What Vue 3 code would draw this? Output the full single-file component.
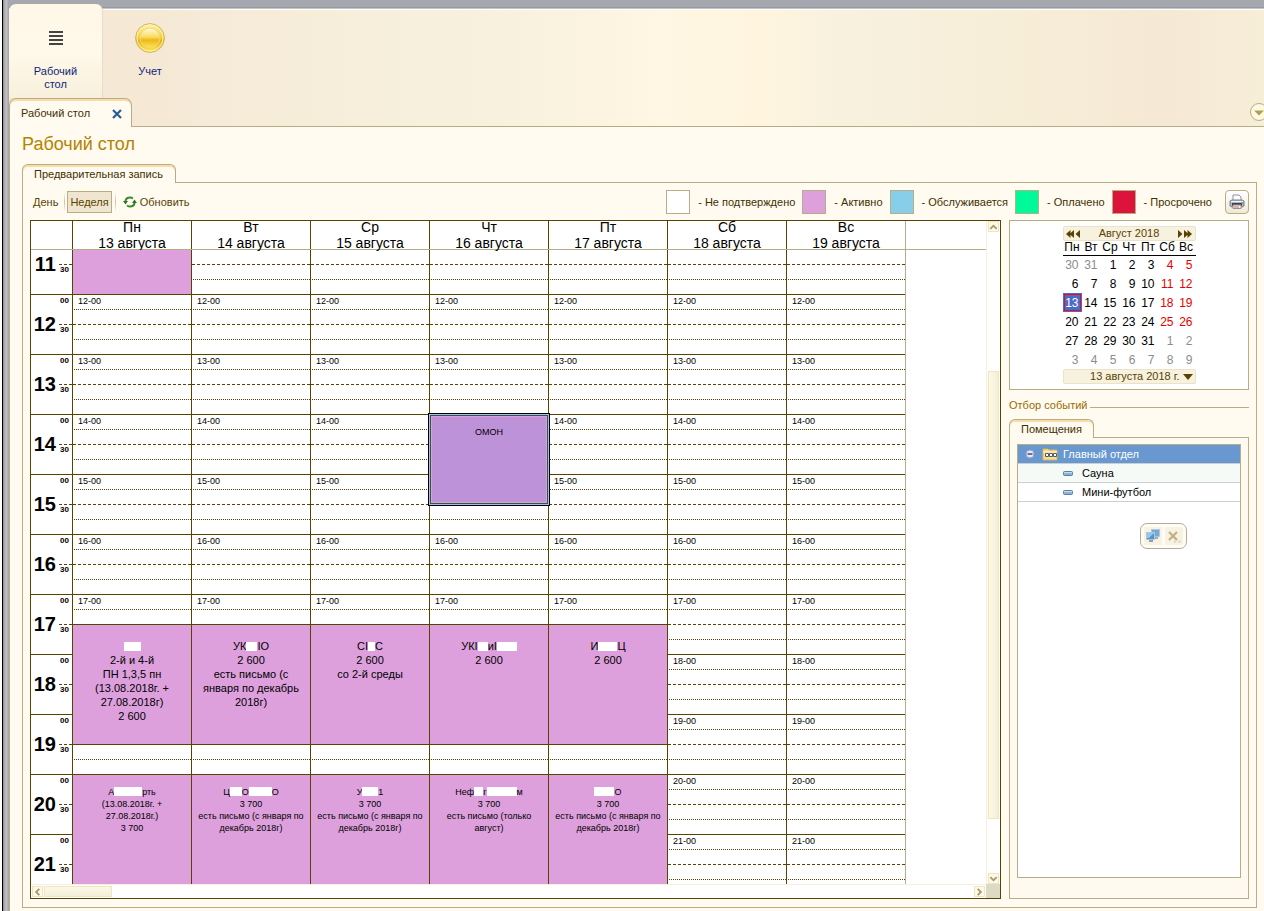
<script setup>
import { ref } from 'vue'

const FIRST_HOUR = 11
const hours = Array.from({ length: 11 }, (_, i) => FIRST_HOUR + i)
const slots = Array.from({ length: 44 }, (_, i) => i)

// In event lines a number is a blanked-out stretch of that many pixels.
const winter = ['есть письмо (с января по', 'декабрь 2018г)']
const days = [
  {
    name: 'Пн', date: '13 августа', events: [
      { from: 10, to: 12, lines: [] },
      { from: 17.5, to: 19.5, lines: [[17], '2-й и 4-й', 'ПН 1,3,5 пн', '(13.08.2018г. +', '27.08.2018г)', '2 600'] },
      { from: 20, to: 22, small: true, lines: [['А', 28, 'рть'], '(13.08.2018г. +', '27.08.2018г.)', '3 700'] }
    ]
  },
  {
    name: 'Вт', date: '14 августа', events: [
      { from: 17.5, to: 19.5, lines: [['УК', 11, 'IО'], '2 600', 'есть письмо (с', 'января по декабрь', '2018г)'] },
      { from: 20, to: 22, small: true, lines: [['Ц', 12, 'О', 23, 'О'], '3 700', ...winter] }
    ]
  },
  {
    name: 'Ср', date: '15 августа', events: [
      { from: 17.5, to: 19.5, lines: [['СI', 7, 'С'], '2 600', 'со 2-й среды'] },
      { from: 20, to: 22, small: true, lines: [['У', 16, '1'], '3 700', ...winter] }
    ]
  },
  {
    name: 'Чт', date: '16 августа', events: [
      { from: 14, to: 15.5, small: true, selected: true, lines: ['ОМОН'] },
      { from: 17.5, to: 19.5, lines: [['УКI', 10, 'иI', 20], '2 600'] },
      { from: 20, to: 22, small: true, lines: [['Неф', 9, 'г', 30, 'м'], '3 700', 'есть письмо (только', 'август)'] }
    ]
  },
  {
    name: 'Пт', date: '17 августа', events: [
      { from: 17.5, to: 19.5, lines: [['И', 19, 'Ц'], '2 600'] },
      { from: 20, to: 22, small: true, lines: [[20, 'О'], '3 700', ...winter] }
    ]
  },
  { name: 'Сб', date: '18 августа', events: [] },
  { name: 'Вс', date: '19 августа', events: [] }
]

const row = h => Math.max(0, (h - FIRST_HOUR) * 4) + 1
const slotClass = (day, s) => {
  if (s % 4 === 0 || day.events.some(e => row(e.to) === s + 1)) return 'solid'
  return s % 4 === 2 ? 'dashed' : 'dotted'
}
const covered = (day, s) => day.events.some(e => row(e.from) <= s + 1 && row(e.to) > s + 1)
const labelled = (day, s) => s > 0 && s % 4 === 0 && !covered(day, s)
const parts = line => (Array.isArray(line) ? line : [line])

const legend = [
  { key: 'white', text: '- Не подтверждено' },
  { key: 'plum', text: '- Активно' },
  { key: 'sky', text: '- Обслуживается' },
  { key: 'green', text: '- Оплачено' },
  { key: 'red', text: '- Просрочено' }
]

const weekdays = ['Пн', 'Вт', 'Ср', 'Чт', 'Пт', 'Сб', 'Вс']
const weeks = Array.from({ length: 6 }, (_, w) =>
  Array.from({ length: 7 }, (_, d) => {
    const n = w * 7 + d - 1
    const other = n < 1 || n > 31
    return { day: n < 1 ? n + 31 : n > 31 ? n - 31 : n, other, weekend: !other && d > 4, current: n === 13 }
  })
)
const mode = ref('week')
</script>

<template>
  <div class="app">
    <div class="edge"></div>
    <div class="window">
      <header class="ribbon">
        <nav class="sections">
          <button class="section active">
            <svg width="32" height="32" viewBox="0 0 32 32"><path d="M9 10h14M9 14h14M9 18h14M9 22h14" stroke="#444" stroke-width="2" /></svg>
            <span>Рабочий<br>стол</span>
          </button>
          <button class="section">
            <svg width="32" height="32" viewBox="0 0 32 32">
              <defs>
                <linearGradient id="coin" x1="0" y1="0" x2="0" y2="1">
                  <stop offset="0" stop-color="#fff7b0" /><stop offset=".45" stop-color="#f7d040" /><stop offset=".6" stop-color="#e9b010" /><stop offset="1" stop-color="#ffe95c" />
                </linearGradient>
                <linearGradient id="coinIn" x1="0" y1="0" x2="0" y2="1">
                  <stop offset="0" stop-color="#fffbe0" /><stop offset=".45" stop-color="#f9dc60" /><stop offset=".6" stop-color="#eeb71a" /><stop offset="1" stop-color="#ffe650" />
                </linearGradient>
              </defs>
              <circle cx="16" cy="16" r="14.4" fill="url(#coin)" stroke="#cdb56c" />
              <circle cx="16" cy="16" r="13" fill="none" stroke="#fff3a8" />
              <circle cx="16" cy="16" r="10" fill="url(#coinIn)" stroke="#f0d878" />
            </svg>
            <span>Учет</span>
          </button>
        </nav>
        <div class="doc-tabs">
          <div class="doc-tab">
            <span>Рабочий стол</span>
            <button class="close" aria-label="Закрыть">
              <svg width="10" height="10" viewBox="0 0 10 10"><path d="M1 1l8 8M9 1l-8 8" stroke="#2a5c92" stroke-width="2.2" /></svg>
            </button>
          </div>
          <div class="doc-rest">
            <button class="more" aria-label="Меню">
              <svg width="20" height="20" viewBox="0 0 20 20"><circle cx="10" cy="10" r="8.5" fill="#fff8e2" stroke="#b5ad84" /><path d="M5 8.500h10l-5 5z" fill="#b39f52" /></svg>
            </button>
          </div>
        </div>
      </header>

      <main class="page">
        <h1>Рабочий стол</h1>
        <div class="tab-line"><span class="tab main-tab">Предварительная запись</span><i></i></div>
        <section class="panel">
          <div class="toolbar">
            <button class="mode" :class="{ on: mode === 'day' }" @click="mode = 'day'">День</button>
            <i class="sep"></i>
            <button class="mode" :class="{ on: mode === 'week' }" @click="mode = 'week'">Неделя</button>
            <i class="sep"></i>
            <button class="refresh">
              <svg width="14" height="12" viewBox="0 0 14 12"><path d="M2.500 6V5q.5-3.500 4.500-3.500 1.500 0 3 1M11.500 6v1q-.5 3.500-4.500 3.500-1.500 0-3-1" fill="none" stroke="#3a8a2e" stroke-width="2" /><path d="M0 5h5L2.500 8.500zM9 7h5L11.500 3.500z" fill="#2c7a20" /></svg>
              Обновить
            </button>
            <ul class="legend">
              <li v-for="l in legend" :key="l.key"><i class="swatch" :class="l.key"></i><span>{{ l.text }}</span></li>
            </ul>
            <button class="print" aria-label="Печать">
              <svg width="18" height="18" viewBox="0 0 18 18">
                <path d="M5 2h6l2 2v4H5z" fill="#fff" stroke="#8e93a3" />
                <path d="M2 8l2-1h10l2 1v5l-2 1H4l-2-1z" fill="#b4b8c4" stroke="#7b7f8d" />
                <path d="M3 8.500h12" stroke="#f4f5f8" />
                <path d="M4 10h10v3H4z" fill="#3d3f49" /><path d="M5 12h8v3.500H5z" fill="#f6f6f6" stroke="#9a8f8a" />
                <path d="M6 14h5" stroke="#c96a50" /><path d="M13 10h2" stroke="#4a9a4a" />
              </svg>
            </button>
          </div>

          <div class="columns">
            <div class="schedule">
              <div class="view">
                <div class="head">
                  <div class="corner"></div>
                  <div v-for="d in days" :key="d.date" class="day-head">{{ d.name }}<br>{{ d.date }}</div>
                </div>
                <div class="body">
                  <div class="times">
                    <div v-for="(h, i) in hours" :key="h" class="hour">
                      <b>{{ h }}</b><span class="min"><template v-if="i > 0">00</template></span><span class="min half">30</span>
                    </div>
                  </div>
                  <div v-for="d in days" :key="d.date" class="day">
                    <div v-for="s in slots" :key="s" class="slot" :class="slotClass(d, s)" :style="{ gridRow: s + 1 }">
                      <span v-if="labelled(d, s)">{{ FIRST_HOUR + s / 4 }}-00</span>
                    </div>
                    <div
                      v-for="e in d.events" :key="e.from" class="event" :class="{ small: e.small, selected: e.selected }"
                      :style="{ gridRow: row(e.from) + ' / ' + row(e.to) }"
                    >
                      <p v-for="(line, i) in e.lines" :key="i">
                        <template v-for="(p, j) in parts(line)" :key="j"><i v-if="typeof p === 'number'" class="blank" :style="{ width: p + 'px' }"></i><template v-else>{{ p }}</template></template>
                      </p>
                    </div>
                  </div>
                </div>
              </div>
              <div class="vbar">
                <button aria-label="Вверх"><svg width="10" height="10" viewBox="0 0 10 10"><path d="M1.500 7L5 3.500 8.500 7" /></svg></button>
                <i class="before"></i><i class="thumb"></i><i class="after"></i>
                <button aria-label="Вниз"><svg width="10" height="10" viewBox="0 0 10 10"><path d="M1.500 3L5 6.500 8.500 3" /></svg></button>
              </div>
              <div class="hbar">
                <button aria-label="Влево"><svg width="10" height="10" viewBox="0 0 10 10"><path d="M7 1.500L3.500 5 7 8.500" /></svg></button>
                <i class="thumb"></i>
                <button aria-label="Вправо"><svg width="10" height="10" viewBox="0 0 10 10"><path d="M3 1.500L6.500 5 3 8.500" /></svg></button>
              </div>
              <div class="grip"></div>
            </div>

            <aside class="side">
              <div class="month-box">
                <div class="month">
                  <div class="bar">
                    <button aria-label="Назад"><svg width="14" height="8" viewBox="0 0 14 8"><path d="M4.500 0v8L0 4zM8 0v8L3.500 4zM14 0v8L9.500 4z" /></svg></button>
                    <span>Август 2018</span>
                    <button aria-label="Вперед"><svg width="14" height="8" viewBox="0 0 14 8"><path d="M0 0v8l4.500-4zM6 0v8l4.500-4zM9.500 0v8L14 4z" /></svg></button>
                  </div>
                  <table>
                    <thead><tr><th v-for="w in weekdays" :key="w">{{ w }}</th></tr></thead>
                    <tbody>
                      <tr v-for="(w, i) in weeks" :key="i">
                        <td v-for="(c, j) in w" :key="j" :class="{ other: c.other, weekend: c.weekend, current: c.current }">{{ c.day }}</td>
                      </tr>
                    </tbody>
                  </table>
                  <button class="bar today">13 августа 2018 г. <svg width="10" height="6" viewBox="0 0 10 6"><path d="M0 0h10L5 6z" /></svg></button>
                </div>
              </div>
              <div class="caption"><span>Отбор событий</span><i></i></div>
              <div class="tab-line"><span class="tab rooms-tab">Помещения</span><i></i></div>
              <div class="rooms">
                <ul class="tree">
                  <li class="group">
                    <svg width="10" height="10" viewBox="0 0 10 10"><circle cx="5" cy="5" r="4" fill="#e4e9f5" stroke="#9a9fc0" /><path d="M2.500 5h5" stroke="#3d4a86" stroke-width="1.500" /></svg>
                    <svg class="folder" width="16" height="14" viewBox="0 0 16 14"><path d="M1 2h5l1 1h8v10H1z" fill="#f8dd92" stroke="#d8b45c" /><path d="M1 5h14" stroke="#fff0c0" /><path d="M3.500 6.500h3v3h-3zM7.500 6.500h3v3h-3zM11.500 6.500h3v3h-3z" fill="#fff" stroke="#4d5a70" /></svg>
                    Главный отдел
                  </li>
                  <li v-for="r in ['Сауна', 'Мини-футбол']" :key="r" class="item">
                    <svg width="10" height="5" viewBox="0 0 10 5"><rect x=".5" y=".5" width="9" height="4" rx="1" fill="#8fb4d2" stroke="#5a7fa0" /><path d="M1 1.500h8" stroke="#c6dcec" /></svg>
                    {{ r }}
                  </li>
                </ul>
                <div class="float">
                  <button aria-label="Окна">
                    <svg width="16" height="16" viewBox="0 0 16 16"><rect x="6.500" y="1.500" width="8" height="7" fill="#6fabdc" stroke="#b4c6d3" /><path d="M9 10h4" stroke="#9aabb8" stroke-width="2" /><rect x="1.500" y="4.500" width="8" height="7" fill="#4f94cf" stroke="#b4c6d3" /><path d="M2 5h7l-5 5H2z" fill="#96c6ea" /><path d="M4 13h4" stroke="#8d9eaa" stroke-width="2" /></svg>
                  </button>
                  <button aria-label="Сбросить">
                    <svg width="16" height="16" viewBox="0 0 16 16"><path d="M3 4l8 8M11 4l-8 8" stroke="#c2b083" stroke-width="2.200" /><circle cx="9" cy="13.500" r="1.500" fill="#e4dcc8" /><circle cx="13.500" cy="13.500" r="1.500" fill="#e4dcc8" /></svg>
                  </button>
                </div>
              </div>
            </aside>
          </div>
        </section>
      </main>
    </div>
  </div>
</template>

<style>
body {
  margin: 0;
}
</style>

<style scoped>
.app {
  --line: #b5ad84;
  --brown: #5a4300;
  --paper: #fffbf0;
  display: flex;
  height: 100vh;
  min-height: 600px;
  overflow: hidden;
  font: 11px/13px "Liberation Sans", Arial, sans-serif;
  color: #3f2f00;
  background: var(--paper);
}
.app *, .app *::before {
  box-sizing: border-box;
}
button {
  font: inherit;
  color: inherit;
  background: none;
  border: 0;
  padding: 0;
  display: flex;
  align-items: center;
  justify-content: center;
}
ul {
  list-style: none;
  margin: 0;
  padding: 0;
}
.edge {
  flex: 0 0 9px;
  background: linear-gradient(90deg, #fff 2px, #000 2px, #000 3px, #8e8e8e 3px, #c4c4c8 6px, #a0a0a4 9px);
}
.window {
  flex: 1;
  min-width: 0;
  display: flex;
  flex-direction: column;
}
.ribbon {
  flex: none;
  background:
    linear-gradient(#a5a8ae 0, #a5a8ae 7px, #85898f 8px, #fff 9px, #fff 10px, transparent 10px),
    linear-gradient(90deg, #f5e9d4 0, #f5e9d6 12%, #f7efdb 28%, #f8f1de 40%, #fff6e3 52%, #fff5df 60%, #f8f1de 66%, #f7eed8 80%, #f5e8d4 92%, #f7eed8 100%);
}
.sections {
  display: flex;
  padding-top: 4px;
}
.section {
  width: 94px;
  height: 94px;
  flex-direction: column;
  justify-content: flex-start;
  padding-top: 18px;
  gap: 11px;
  color: #0d1f7a;
  border-radius: 7px 7px 0 0;
}
.section.active {
  background: linear-gradient(#fff7e8, #fff9ea 50%, #f8f0dc);
  border-right: 1px solid #e6dcc8;
}
.doc-tabs {
  display: flex;
  height: 29px;
}
.doc-tab {
  width: 123px;
  display: flex;
  align-items: center;
  justify-content: space-between;
  padding: 1px 9px 0 11px;
  background: var(--paper);
  border: 1px solid var(--line);
  border-bottom: 0;
  border-radius: 7px 7px 0 0;
  box-shadow: inset 0 2px #fbdca8;
}
.doc-rest {
  flex: 1;
  display: flex;
  justify-content: flex-end;
  align-items: center;
  border-bottom: 1px solid var(--line);
}
.more {
  margin-right: -5px;
}
.page {
  flex: 1;
  min-height: 0;
  display: flex;
  flex-direction: column;
  padding: 7px 7px 3px 12px;
  border-left: 1px solid var(--line);
  background: var(--paper);
}
h1 {
  margin: 0 0 10px;
  font: 18px/20px "Liberation Sans", Arial, sans-serif;
  color: #b58200;
}
.tab-line {
  display: flex;
}
.tab-line i {
  flex: 1;
  border-bottom: 1px solid var(--line);
}
.tab {
  height: 19px;
  padding: 3px 11px 0;
  border: 1px solid var(--line);
  border-bottom: 0;
  border-radius: 6px 6px 0 0;
  box-shadow: inset 0 2px #fbdca8;
}
.main-tab {
  min-width: 154px;
}
.panel {
  flex: 1;
  min-height: 0;
  display: flex;
  flex-direction: column;
  padding: 6px 7px 8px;
  border: 1px solid var(--line);
  border-top: 0;
}
.toolbar {
  display: flex;
  align-items: center;
  height: 26px;
  margin-bottom: 5px;
  color: #5a4300;
}
.mode {
  height: 22px;
  padding: 0 2px;
  border: 1px solid transparent;
}
.mode.on {
  background: #f0e6d0;
  border-color: var(--line);
}
.sep {
  width: 1px;
  height: 20px;
  margin: 0 2px 0 3px;
  background: linear-gradient(transparent, #c9c0a4, transparent);
}
.refresh {
  margin-left: 5px;
  gap: 3px;
}
.legend {
  display: flex;
  gap: 7px;
  margin-left: auto;
  color: #3f2f00;
}
.legend li {
  display: flex;
  align-items: center;
  gap: 8px;
}
.swatch {
  width: 24px;
  height: 24px;
  border: 1px solid var(--line);
}
.white { background: #fff; }
.plum { background: #dda0dd; }
.sky { background: #87ceeb; }
.green { background: #00fa9a; }
.red { background: #dc143c; }
.print {
  width: 24px;
  height: 24px;
  margin-left: 13px;
  border: 1px solid var(--line);
  border-radius: 4px;
  background: linear-gradient(#fff, #f0e9d8);
}
.columns {
  flex: 1;
  min-height: 0;
  display: flex;
  gap: 8px;
}
.schedule {
  flex: 1;
  min-width: 0;
  display: grid;
  grid-template: minmax(0, 1fr) 14px / minmax(0, 1fr) 14px;
  border: 1px solid var(--brown);
  background: #fff;
  color: #000;
}
.view {
  min-width: 0;
  display: flex;
  flex-direction: column;
}
.head {
  flex: none;
  display: flex;
  height: 29px;
  overflow-x: clip;
  border-bottom: 1px solid var(--line);
}
.corner {
  flex: 0 0 42px;
  border-right: 1px solid var(--brown);
}
.day-head {
  flex: 0 0 119px;
  display: flex;
  align-items: center;
  justify-content: center;
  text-align: center;
  font-size: 14px;
  line-height: 16px;
  border-right: 1px solid var(--brown);
}
.day-head:last-child, .day:last-child {
  border-right-color: var(--line);
}
.body {
  flex: 1;
  min-height: 0;
  overflow: hidden;
  display: flex;
  align-items: flex-start;
}
.times, .day {
  margin-top: -16px;
}
.times {
  flex: 0 0 42px;
  border-right: 1px solid var(--brown);
}
.hour {
  height: 60px;
  display: grid;
  grid-template: 29px 31px / 28px 13px;
  border-top: 1px solid var(--brown);
}
.hour b {
  grid-row: 1 / 3;
  text-align: right;
  padding: 19px 3px 0 0;
  font-size: 20px;
  line-height: 20px;
}
.min {
  grid-column: 2;
  font: bold 8px/10px "Liberation Sans", Arial, sans-serif;
  padding: 1px 0 0 1px;
}
.half {
  background: repeating-linear-gradient(90deg, var(--brown) 0 3px, transparent 3px 5px) 0 0 / 100% 1px no-repeat;
}
.day {
  flex: 0 0 119px;
  display: grid;
  grid-template-rows: repeat(44, 15px);
  border-right: 1px solid var(--brown);
}
.slot {
  grid-column: 1;
  padding: 1px 0 0 5px;
  font-size: 9px;
  background-size: 100% 1px;
  background-repeat: no-repeat;
}
.solid {
  background-image: linear-gradient(var(--brown), var(--brown));
}
.dashed {
  background-image: repeating-linear-gradient(90deg, var(--brown) 0 3px, transparent 3px 5px);
}
.dotted {
  background-image: repeating-linear-gradient(90deg, transparent 0 1px, var(--brown) 1px 2px);
}
.event {
  grid-column: 1;
  padding-top: 14px;
  background: #dda0dd;
  border-top: 1px solid var(--brown);
  text-align: center;
  white-space: nowrap;
  line-height: 14px;
}
.event p {
  margin: 0;
}
.event.small {
  padding-top: 11px;
  font-size: 9px;
  line-height: 12px;
}
.event.selected {
  position: relative;
  z-index: 1;
  margin-top: 1px;
  border: 0;
  background: #bd92d8;
  box-shadow: inset 0 0 0 1px #2c5a3c, inset 0 0 0 2px #dda0dd, 0 0 0 1px #a4bdf7, 0 0 0 2px #000;
}
.blank {
  display: inline-block;
  height: 9px;
  background: #fff;
  vertical-align: -1px;
}
.vbar, .hbar {
  display: flex;
  align-items: center;
}
.vbar {
  flex-direction: column;
  border-left: 1px solid #f7eedc;
}
.hbar {
  border-top: 1px solid #f7eedc;
  padding: 0 1px;
}
.vbar button, .hbar button {
  width: 11px;
  height: 11px;
  background: #fdf8e8;
  border: 1px solid #efe6c0;
}
.vbar path, .hbar path {
  fill: none;
  stroke: #a39a6c;
  stroke-width: 2;
}
.thumb {
  border: 1px solid #efe6c0;
  background: linear-gradient(#fbf8e6, #f3efda);
}
.vbar .before { flex: 139 0 0; }
.vbar .thumb {
  flex: 447 0 0;
  width: 11px;
  background: linear-gradient(90deg, #fbf8e6, #f3efda);
}
.vbar .after { flex: 54 0 0; }
.hbar .thumb {
  width: 68px;
  height: 11px;
  margin: 0 auto 0 1px;
}
.grip {
  background: #dcdac4;
}
.side {
  flex: 0 0 240px;
  display: flex;
  flex-direction: column;
}
.month-box {
  padding: 5px 0;
  border: 1px solid var(--line);
  background: #fff;
  display: flex;
  justify-content: center;
}
.month {
  width: 133px;
}
.bar {
  display: flex;
  align-items: center;
  justify-content: space-between;
  width: 100%;
  height: 15px;
  padding: 0 2px;
  color: #5a4300;
  background: #f7f1df;
  border: 1px solid #ece2c6;
  border-radius: 2px;
}
.bar path {
  fill: #5a4300;
}
.today {
  justify-content: flex-end;
  gap: 3px;
}
table {
  width: 100%;
  table-layout: fixed;
  border-collapse: collapse;
  color: #000;
  font-size: 12px;
}
th {
  height: 14px;
  padding: 0;
  line-height: 13px;
  font-weight: normal;
  text-align: center;
  border-bottom: 1px solid #000;
}
td {
  height: 19px;
  padding: 1px 3px 0 0;
  text-align: right;
}
.other { color: #8c8c8c; }
.weekend { color: #e60000; }
.current {
  color: #fff;
  background: #4c6bc6;
  box-shadow: inset 0 0 0 1px #4c6bc6, inset 0 0 0 2px #e01020;
}
.caption {
  display: flex;
  align-items: center;
  gap: 3px;
  margin: 9px 0 7px;
  color: #9a6c00;
}
.caption i {
  flex: 1;
  margin-top: 4px;
  border-top: 1px solid var(--line);
}
.rooms-tab {
  min-width: 85px;
}
.rooms {
  flex: 1;
  min-height: 0;
  position: relative;
  padding: 6px 7px 20px;
  border: 1px solid var(--line);
  border-top: 0;
  background: #fffaf0;
}
.tree {
  height: 100%;
  border: 1px solid var(--line);
  background: #fff;
  color: #000;
}
.tree li {
  display: flex;
  align-items: center;
  height: 19px;
  border-bottom: 1px solid #ccd0d0;
}
.tree .group {
  padding-left: 7px;
  color: #fff;
  background: #6898cf;
}
.folder {
  margin: 0 5px 0 7px;
}
.item {
  padding-left: 45px;
  gap: 9px;
}
.item:nth-child(2) {
  background: #f6faf6;
}
.float {
  position: absolute;
  left: 130px;
  top: 85px;
  display: flex;
  gap: 3px;
  padding: 3px;
  border: 1px solid #b0aca0;
  border-radius: 7px;
  background: #fffcf2;
}
.float button {
  width: 18px;
  height: 18px;
  background: #f7f2e4;
}
</style>
